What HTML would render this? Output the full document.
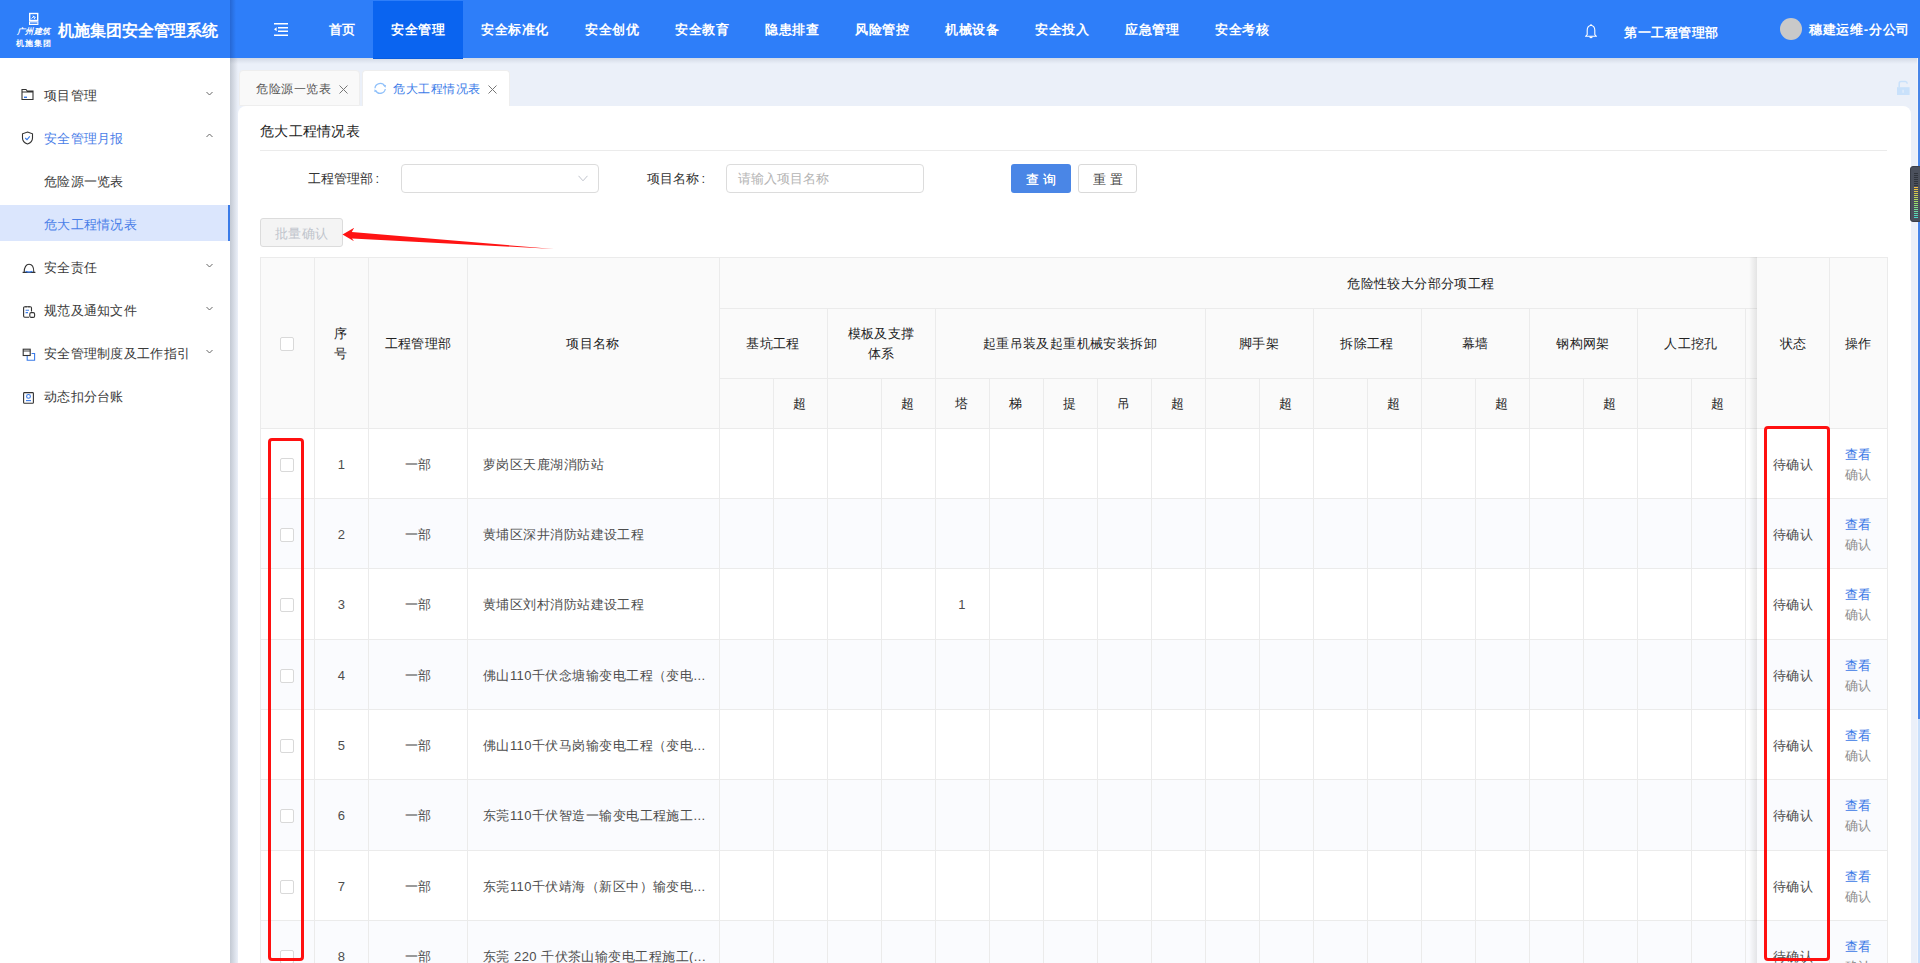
<!DOCTYPE html><html><head><meta charset="utf-8"><title>危大工程情况表</title><style>
*{margin:0;padding:0;box-sizing:border-box}
svg{display:block}
html,body{width:1920px;height:963px;overflow:hidden}
body{position:relative;background:#ebf0f9;font-family:"Liberation Sans",sans-serif;font-size:13px;color:#333}
.a{position:absolute}
.hdr{left:0;top:0;width:1920px;height:58px;background:#2e7ef9}
.nav{top:1px;height:58px;line-height:58px;color:#fff;font-size:13px;letter-spacing:0.5px;font-weight:bold;white-space:nowrap}
.navact{background:#0a64f0}
.side{left:0;top:58px;width:230px;height:905px;background:#fff}
.sshadow{left:230px;top:58px;width:8px;height:905px;background:linear-gradient(to right,#c3c9d3,#ebf0f9)}
.mi{left:0;width:230px;height:36px;line-height:36px;font-size:13px;letter-spacing:0.3px;color:#333;white-space:nowrap}
.t{white-space:nowrap;line-height:1}
.cb{width:14px;height:14px;border:1px solid #d9d9d9;border-radius:2px;background:#fff}

.hl{height:1px;background:#ebeef5}
.th{color:#222;font-size:13px;letter-spacing:0.4px;text-align:center;white-space:nowrap;line-height:20px}
.td{color:#4d4d4d;font-size:13px;letter-spacing:0.45px;white-space:nowrap;line-height:20px}
</style></head><body>
<div class="a hdr"></div>
<div class="a" style="left:16px;top:12px;width:36px;height:38px">
<svg width="36" height="38" viewBox="0 0 36 38">
<rect x="13.7" y="1.5" width="8" height="7" fill="none" stroke="#fff" stroke-width="1.4"/>
<path d="M15.5 6.5 Q17.5 3 19.8 5.5 M17 3.6 L18.8 7.2" fill="none" stroke="#fff" stroke-width="0.9"/>
<rect x="13" y="9.3" width="9.4" height="3.7" fill="#fff"/>
<rect x="14" y="10.3" width="7.4" height="1.7" fill="#5d9bf9"/>
</svg></div>
<div class="a t" style="left:17px;top:27.5px;font-size:8px;color:#fff;font-style:italic;font-weight:bold;letter-spacing:0.4px">广州建筑</div>
<div class="a t" style="left:16px;top:39.5px;font-size:8px;color:#fff;font-weight:bold;letter-spacing:1.1px">机施集团</div>
<div class="a t" style="left:58px;top:22px;font-size:16.3px;color:#fff;font-weight:bold">机施集团安全管理系统</div>
<div class="a" style="left:230px;top:0;width:6px;height:58px;background:linear-gradient(to right,rgba(0,0,40,0.18),rgba(0,0,40,0))"></div>
<div class="a" style="left:274px;top:23px;width:14px;height:13px"><svg width="14" height="13" viewBox="0 0 14 13">
<rect x="0" y="0" width="14" height="1.5" fill="#fff"/><rect x="4" y="4" width="10" height="1.5" fill="#fff"/>
<rect x="4" y="7.5" width="10" height="1.5" fill="#fff"/><rect x="0" y="11.5" width="14" height="1.5" fill="#fff"/>
<path d="M0 6.2 L2.6 4.2 L2.6 8.2Z" fill="#fff"/></svg></div>
<div class="a nav" style="left:311px;width:62px;text-align:center">首页</div>
<div class="a nav navact" style="left:373px;width:90px;text-align:center">安全管理</div>
<div class="a nav" style="left:463px;width:104px;text-align:center">安全标准化</div>
<div class="a nav" style="left:567px;width:90px;text-align:center">安全创优</div>
<div class="a nav" style="left:657px;width:90px;text-align:center">安全教育</div>
<div class="a nav" style="left:747px;width:90px;text-align:center">隐患排查</div>
<div class="a nav" style="left:837px;width:90px;text-align:center">风险管控</div>
<div class="a nav" style="left:927px;width:90px;text-align:center">机械设备</div>
<div class="a nav" style="left:1017px;width:90px;text-align:center">安全投入</div>
<div class="a nav" style="left:1107px;width:90px;text-align:center">应急管理</div>
<div class="a nav" style="left:1197px;width:90px;text-align:center">安全考核</div>
<div class="a" style="left:1585px;top:24px;width:12px;height:15px"><svg width="12" height="15" viewBox="0 0 12 15">
<path d="M6 1.2 C3.3 1.8 2.2 3.8 2.2 6.2 L2.2 10.6 L0.8 12.2 L11.2 12.2 L9.8 10.6 L9.8 6.2 C9.8 3.8 8.7 1.8 6 1.2Z" fill="none" stroke="#fff" stroke-width="1.1"/>
<path d="M4.6 12.6 Q6 14.6 7.4 12.6" fill="none" stroke="#fff" stroke-width="1.1"/>
<rect x="5.5" y="0" width="1" height="1.5" fill="#fff"/></svg></div>
<div class="a t" style="left:1624px;top:25.5px;font-size:13px;letter-spacing:0.5px;color:#fff;font-weight:bold">第一工程管理部</div>
<div class="a" style="left:1780px;top:18px;width:22px;height:22px;border-radius:50%;background:#c9c9c9"></div>
<div class="a t" style="left:1809px;top:23px;font-size:13px;letter-spacing:0.7px;color:#fff;font-weight:bold">穗建运维-分公司</div>
<div class="a side"></div>
<div class="a sshadow"></div>
<div class="a" style="left:230px;top:58px;width:1690px;height:6px;background:linear-gradient(to bottom,rgba(0,20,60,0.10),rgba(0,20,60,0))"></div>
<div class="a mi" style="top:78px;padding-left:44px;color:#3a3a3a">项目管理</div>
<div class="a" style="left:21px;top:88px;width:14px;height:14px"><svg width="14" height="14" viewBox="0 0 14 14"><path d="M1 1.5 H5 L6.2 3 H12 V11.5 H1Z M1 4 H12" fill="none" stroke="#333" stroke-width="1.1"/><rect x="3" y="8.6" width="3" height="1.4" fill="#3a7be8"/></svg></div>
<div class="a" style="left:206px;top:90.5px;width:7px;height:5px"><svg width="7" height="5" viewBox="0 0 7 5"><path d="M0.5 1 L3.5 4 L6.5 1" fill="none" stroke="#666" stroke-width="1"/></svg></div>
<div class="a mi" style="top:121px;padding-left:44px;color:#4a7ee8">安全管理月报</div>
<div class="a" style="left:21px;top:131px;width:14px;height:14px"><svg width="14" height="14" viewBox="0 0 14 14"><path d="M6.5 1 L11.5 2.8 V7 C11.5 10 9 12.2 6.5 13 C4 12.2 1.5 10 1.5 7 V2.8Z" fill="none" stroke="#333" stroke-width="1.1"/><path d="M4.2 7 L6 8.6 L8.8 5.4" fill="none" stroke="#3a7be8" stroke-width="1.1"/></svg></div>
<div class="a" style="left:206px;top:133px;width:7px;height:5px"><svg width="7" height="5" viewBox="0 0 7 5"><path d="M0.5 4 L3.5 1 L6.5 4" fill="none" stroke="#666" stroke-width="1"/></svg></div>
<div class="a mi" style="top:164px;padding-left:44px;color:#3a3a3a">危险源一览表</div>
<div class="a" style="left:0;top:205px;width:230px;height:36px;background:#dbe6fd"></div>
<div class="a" style="left:228px;top:205px;width:2px;height:36px;background:#3a7be8"></div>
<div class="a mi" style="top:207px;padding-left:44px;color:#4a7ee8">危大工程情况表</div>
<div class="a mi" style="top:250px;padding-left:44px;color:#3a3a3a">安全责任</div>
<div class="a" style="left:22px;top:260.5px;width:14px;height:14px"><svg width="14" height="14" viewBox="0 0 14 14"><path d="M2.2 11 C2.2 6.2 4.2 3.3 7 3.3 C9.8 3.3 11.8 6.2 11.8 11" fill="none" stroke="#333" stroke-width="1.1"/><path d="M0.6 11.4 H13.4" stroke="#333" stroke-width="1.2"/><path d="M3.6 10.2 Q7 12 10.4 10.2" stroke="#3a7be8" fill="none" stroke-width="1.1"/></svg></div>
<div class="a" style="left:206px;top:262.5px;width:7px;height:5px"><svg width="7" height="5" viewBox="0 0 7 5"><path d="M0.5 1 L3.5 4 L6.5 1" fill="none" stroke="#666" stroke-width="1"/></svg></div>
<div class="a mi" style="top:293px;padding-left:44px;color:#3a3a3a">规范及通知文件</div>
<div class="a" style="left:22px;top:303.5px;width:14px;height:14px"><svg width="14" height="14" viewBox="0 0 14 14"><path d="M9.5 7.5 V4 Q9.5 2.8 8.3 2.8 H2.8 Q1.6 2.8 1.6 4 V12 Q1.6 13.2 2.8 13.2 H7" fill="none" stroke="#333" stroke-width="1.1"/><path d="M4 2 V3.5 M7 2 V3.5" stroke="#333" stroke-width="1"/><path d="M3.6 6.3 H7 M3.6 8.6 H6" stroke="#3a7be8" stroke-width="1.1"/><rect x="7.8" y="8.6" width="4.8" height="4.8" rx="1.4" fill="#fff" stroke="#333" stroke-width="1.1"/></svg></div>
<div class="a" style="left:206px;top:305.5px;width:7px;height:5px"><svg width="7" height="5" viewBox="0 0 7 5"><path d="M0.5 1 L3.5 4 L6.5 1" fill="none" stroke="#666" stroke-width="1"/></svg></div>
<div class="a mi" style="top:336px;padding-left:44px;color:#3a3a3a">安全管理制度及工作指引</div>
<div class="a" style="left:22px;top:346.5px;width:14px;height:14px"><svg width="14" height="14" viewBox="0 0 14 14"><rect x="1.2" y="2.2" width="7" height="6.3" fill="none" stroke="#333" stroke-width="1.1"/><path d="M1.2 4 H8.2" stroke="#333" stroke-width="0.9"/><path d="M5.2 9 V13.2 H12.6 V6.5 H9.6" fill="none" stroke="#3a7be8" stroke-width="1.1"/></svg></div>
<div class="a" style="left:206px;top:348.5px;width:7px;height:5px"><svg width="7" height="5" viewBox="0 0 7 5"><path d="M0.5 1 L3.5 4 L6.5 1" fill="none" stroke="#666" stroke-width="1"/></svg></div>
<div class="a mi" style="top:379px;padding-left:44px;color:#3a3a3a">动态扣分台账</div>
<div class="a" style="left:22px;top:389.5px;width:14px;height:14px"><svg width="14" height="14" viewBox="0 0 14 14"><rect x="1.6" y="2.6" width="9.8" height="10.6" rx="0.8" fill="none" stroke="#333" stroke-width="1.1"/><circle cx="6.5" cy="6.4" r="1.9" fill="none" stroke="#3a7be8" stroke-width="1.1"/><path d="M4 10.6 H9" stroke="#3a7be8" stroke-width="1.1"/></svg></div>
<div class="a" style="left:239px;top:70px;width:121px;height:36px;background:#f9f9f9;border:1px solid #eeeeee;border-radius:4px 4px 0 0"></div>
<div class="a t" style="left:256px;top:82.5px;font-size:12px;letter-spacing:0.5px;color:#555">危险源一览表</div>
<div class="a" style="left:339px;top:85px;width:9px;height:9px"><svg width="9" height="9" viewBox="0 0 9 9"><path d="M0.5 0.5 L8.5 8.5 M8.5 0.5 L0.5 8.5" stroke="#777" stroke-width="1"/></svg></div>
<div class="a" style="left:362px;top:70px;width:148px;height:42px;background:#fff;border:1px solid #eeeeee;border-bottom:none;border-radius:4px 4px 0 0"></div>
<div class="a" style="left:373px;top:81px;width:14px;height:14px"><svg width="14" height="14" viewBox="0 0 14 14"><path d="M2 7.3 A5.2 5.2 0 0 1 11.8 5.2" fill="none" stroke="#8fc0fa" stroke-width="1.3"/><path d="M10.2 4.6 L13 3.9 L12.6 6.8Z" fill="#8fc0fa"/><path d="M12.3 8 A5.2 5.2 0 0 1 2.6 9.6" fill="none" stroke="#8fc0fa" stroke-width="1.3"/><path d="M4 10.2 L1.3 11 L1.6 8.2Z" fill="#8fc0fa"/></svg></div>
<div class="a t" style="left:393px;top:82.5px;font-size:12px;letter-spacing:0.5px;color:#3a7be8">危大工程情况表</div>
<div class="a" style="left:488px;top:85px;width:9px;height:9px"><svg width="9" height="9" viewBox="0 0 9 9"><path d="M0.5 0.5 L8.5 8.5 M8.5 0.5 L0.5 8.5" stroke="#777" stroke-width="1"/></svg></div>
<div class="a" style="left:1896px;top:80px;width:15px;height:16px"><svg width="15" height="16" viewBox="0 0 15 16"><path d="M3.2 7.5 V3.4 Q3.2 1.6 5 1.6 H9.4 Q10.9 1.6 11.3 3.6" fill="none" stroke="#c9e1fb" stroke-width="1.5"/><rect x="1" y="7.2" width="12.6" height="7.8" fill="#c9e1fb"/><rect x="6.3" y="9.8" width="1.6" height="3" fill="#deebfb"/></svg></div>
<div class="a" style="left:238px;top:106px;width:1673px;height:900px;background:#fff;border-radius:8px 8px 0 0"></div>
<div class="a t" style="left:260px;top:124px;font-size:14px;letter-spacing:0.25px;color:#222">危大工程情况表</div>
<div class="a" style="left:260px;top:150px;width:1627px;height:1px;background:#ebebeb"></div>
<div class="a t" style="left:308px;top:172px;font-size:13px;color:#333">工程管理部<span style="margin-left:2.5px">:</span></div>
<div class="a" style="left:401px;top:164px;width:198px;height:29px;border:1px solid #dcdcdc;border-radius:4px;background:#fff"></div>
<div class="a" style="left:578px;top:175px;width:10px;height:7px"><svg width="10" height="7" viewBox="0 0 10 7"><path d="M0.5 0.8 L5 5.8 L9.5 0.8" fill="none" stroke="#c0c4cc" stroke-width="1"/></svg></div>
<div class="a t" style="left:647px;top:172px;font-size:13px;color:#333">项目名称<span style="margin-left:2.5px">:</span></div>
<div class="a" style="left:726px;top:164px;width:198px;height:29px;border:1px solid #dcdcdc;border-radius:4px;background:#fff"></div>
<div class="a t" style="left:738px;top:172px;font-size:13px;color:#b4b4b4">请输入项目名称</div>
<div class="a" style="left:1011px;top:164px;width:60px;height:29px;border-radius:3px;background:#4a86e6"></div>
<div class="a t" style="left:1025.5px;top:173px;font-size:13px;color:#fff;letter-spacing:4px;text-shadow:0 0 0.3px #fff">查询</div>
<div class="a" style="left:1078px;top:164px;width:59px;height:29px;border:1px solid #d9d9d9;border-radius:3px;background:#fff"></div>
<div class="a t" style="left:1092.5px;top:173px;font-size:13px;color:#444;letter-spacing:4px">重置</div>
<div class="a" style="left:260px;top:218px;width:83px;height:29px;border:1px solid #dcdcdc;border-radius:3px;background:#f4f4f4"></div>
<div class="a t" style="left:275px;top:227px;font-size:13px;letter-spacing:0.4px;color:#c0c4cc">批量确认</div>
<div class="a" style="left:260px;top:257px;width:1627px;height:706px;background:#fff;border-radius:3px 3px 0 0;overflow:hidden">
<div class="a" style="left:0;top:0;width:1627px;height:171px;background:#fafafa"></div>
<div class="a" style="left:0;top:241px;width:1627px;height:70px;background:#fafbfe"></div>
<div class="a" style="left:0;top:382px;width:1627px;height:70px;background:#fafbfe"></div>
<div class="a" style="left:0;top:522px;width:1627px;height:71px;background:#fafbfe"></div>
<div class="a" style="left:0;top:663px;width:1627px;height:70px;background:#fafbfe"></div>
</div>
<div class="a" style="left:260px;top:257px;width:1627px;height:1px;background:#ebebeb"></div>
<div class="a" style="left:260px;top:257px;width:1px;height:706px;background:#ebebeb"></div>
<div class="a" style="left:314px;top:257px;width:1px;height:706px;background:#ebebeb"></div>
<div class="a" style="left:368px;top:257px;width:1px;height:706px;background:#ebebeb"></div>
<div class="a" style="left:467px;top:257px;width:1px;height:706px;background:#ebebeb"></div>
<div class="a" style="left:719px;top:257px;width:1px;height:706px;background:#ebebeb"></div>
<div class="a" style="left:773px;top:378px;width:1px;height:585px;background:#ebebeb"></div>
<div class="a" style="left:827px;top:308px;width:1px;height:655px;background:#ebebeb"></div>
<div class="a" style="left:881px;top:378px;width:1px;height:585px;background:#ebebeb"></div>
<div class="a" style="left:935px;top:308px;width:1px;height:655px;background:#ebebeb"></div>
<div class="a" style="left:989px;top:378px;width:1px;height:585px;background:#ebebeb"></div>
<div class="a" style="left:1043px;top:378px;width:1px;height:585px;background:#ebebeb"></div>
<div class="a" style="left:1097px;top:378px;width:1px;height:585px;background:#ebebeb"></div>
<div class="a" style="left:1151px;top:378px;width:1px;height:585px;background:#ebebeb"></div>
<div class="a" style="left:1205px;top:308px;width:1px;height:655px;background:#ebebeb"></div>
<div class="a" style="left:1259px;top:378px;width:1px;height:585px;background:#ebebeb"></div>
<div class="a" style="left:1313px;top:308px;width:1px;height:655px;background:#ebebeb"></div>
<div class="a" style="left:1367px;top:378px;width:1px;height:585px;background:#ebebeb"></div>
<div class="a" style="left:1421px;top:308px;width:1px;height:655px;background:#ebebeb"></div>
<div class="a" style="left:1475px;top:378px;width:1px;height:585px;background:#ebebeb"></div>
<div class="a" style="left:1529px;top:308px;width:1px;height:655px;background:#ebebeb"></div>
<div class="a" style="left:1583px;top:378px;width:1px;height:585px;background:#ebebeb"></div>
<div class="a" style="left:1637px;top:308px;width:1px;height:655px;background:#ebebeb"></div>
<div class="a" style="left:1691px;top:378px;width:1px;height:585px;background:#ebebeb"></div>
<div class="a" style="left:1745px;top:308px;width:1px;height:655px;background:#ebebeb"></div>
<div class="a" style="left:1799px;top:308px;width:1px;height:655px;background:#ebebeb"></div>
<div class="a" style="left:719px;top:308px;width:1168px;height:1px;background:#ebebeb"></div>
<div class="a" style="left:719px;top:378px;width:1168px;height:1px;background:#ebebeb"></div>
<div class="a" style="left:260px;top:428px;width:1627px;height:1px;background:#ebebeb"></div>
<div class="a" style="left:260px;top:498px;width:1627px;height:1px;background:#ebebeb"></div>
<div class="a" style="left:260px;top:568px;width:1627px;height:1px;background:#ebebeb"></div>
<div class="a" style="left:260px;top:639px;width:1627px;height:1px;background:#ebebeb"></div>
<div class="a" style="left:260px;top:709px;width:1627px;height:1px;background:#ebebeb"></div>
<div class="a" style="left:260px;top:779px;width:1627px;height:1px;background:#ebebeb"></div>
<div class="a" style="left:260px;top:850px;width:1627px;height:1px;background:#ebebeb"></div>
<div class="a" style="left:260px;top:920px;width:1627px;height:1px;background:#ebebeb"></div>
<div class="a th" style="left:241px;top:334px;width:200px;text-align:center;top:324px">序<br>号</div>
<div class="a th" style="left:318px;top:334px;width:200px;text-align:center">工程管理部</div>
<div class="a th" style="left:493px;top:334px;width:200px;text-align:center">项目名称</div>
<div class="a th" style="left:1321px;top:274px;width:200px;text-align:center">危险性较大分部分项工程</div>
<div class="a th" style="left:673px;top:334px;width:200px;text-align:center">基坑工程</div>
<div class="a th" style="left:781px;top:334px;width:200px;text-align:center;top:324px">模板及支撑<br>体系</div>
<div class="a th" style="left:970px;top:334px;width:200px;text-align:center">起重吊装及起重机械安装拆卸</div>
<div class="a th" style="left:1159px;top:334px;width:200px;text-align:center">脚手架</div>
<div class="a th" style="left:1267px;top:334px;width:200px;text-align:center">拆除工程</div>
<div class="a th" style="left:1375px;top:334px;width:200px;text-align:center">幕墙</div>
<div class="a th" style="left:1483px;top:334px;width:200px;text-align:center">钢构网架</div>
<div class="a th" style="left:1591px;top:334px;width:200px;text-align:center">人工挖孔</div>
<div class="a th" style="left:700px;top:394px;width:200px;text-align:center">超</div>
<div class="a th" style="left:808px;top:394px;width:200px;text-align:center">超</div>
<div class="a th" style="left:862px;top:394px;width:200px;text-align:center">塔</div>
<div class="a th" style="left:916px;top:394px;width:200px;text-align:center">梯</div>
<div class="a th" style="left:970px;top:394px;width:200px;text-align:center">提</div>
<div class="a th" style="left:1024px;top:394px;width:200px;text-align:center">吊</div>
<div class="a th" style="left:1078px;top:394px;width:200px;text-align:center">超</div>
<div class="a th" style="left:1186px;top:394px;width:200px;text-align:center">超</div>
<div class="a th" style="left:1294px;top:394px;width:200px;text-align:center">超</div>
<div class="a th" style="left:1402px;top:394px;width:200px;text-align:center">超</div>
<div class="a th" style="left:1510px;top:394px;width:200px;text-align:center">超</div>
<div class="a th" style="left:1618px;top:394px;width:200px;text-align:center">超</div>
<div class="a cb" style="left:280px;top:337px"></div>
<div class="a cb" style="left:280px;top:457.66666666666663px"></div>
<div class="a td" style="left:241.7px;top:454.66666666666663px;width:200px;text-align:center">1</div>
<div class="a td" style="left:318px;top:454.66666666666663px;width:200px;text-align:center">一部</div>
<div class="a td" style="left:483px;top:454.66666666666663px">萝岗区天鹿湖消防站</div>
<div class="a cb" style="left:280px;top:528.0px"></div>
<div class="a td" style="left:241.7px;top:525.0px;width:200px;text-align:center">2</div>
<div class="a td" style="left:318px;top:525.0px;width:200px;text-align:center">一部</div>
<div class="a td" style="left:483px;top:525.0px">黄埔区深井消防站建设工程</div>
<div class="a cb" style="left:280px;top:598.3333333333333px"></div>
<div class="a td" style="left:241.7px;top:595.3333333333333px;width:200px;text-align:center">3</div>
<div class="a td" style="left:318px;top:595.3333333333333px;width:200px;text-align:center">一部</div>
<div class="a td" style="left:483px;top:595.3333333333333px">黄埔区刘村消防站建设工程</div>
<div class="a td" style="left:862px;top:595.3333333333333px;width:200px;text-align:center">1</div>
<div class="a cb" style="left:280px;top:668.6666666666666px"></div>
<div class="a td" style="left:241.7px;top:665.6666666666666px;width:200px;text-align:center">4</div>
<div class="a td" style="left:318px;top:665.6666666666666px;width:200px;text-align:center">一部</div>
<div class="a td" style="left:483px;top:665.6666666666666px">佛山110千伏念塘输变电工程（变电...</div>
<div class="a cb" style="left:280px;top:739.0px"></div>
<div class="a td" style="left:241.7px;top:736.0px;width:200px;text-align:center">5</div>
<div class="a td" style="left:318px;top:736.0px;width:200px;text-align:center">一部</div>
<div class="a td" style="left:483px;top:736.0px">佛山110千伏马岗输变电工程（变电...</div>
<div class="a cb" style="left:280px;top:809.3333333333334px"></div>
<div class="a td" style="left:241.7px;top:806.3333333333334px;width:200px;text-align:center">6</div>
<div class="a td" style="left:318px;top:806.3333333333334px;width:200px;text-align:center">一部</div>
<div class="a td" style="left:483px;top:806.3333333333334px">东莞110千伏智造一输变电工程施工...</div>
<div class="a cb" style="left:280px;top:879.6666666666666px"></div>
<div class="a td" style="left:241.7px;top:876.6666666666666px;width:200px;text-align:center">7</div>
<div class="a td" style="left:318px;top:876.6666666666666px;width:200px;text-align:center">一部</div>
<div class="a td" style="left:483px;top:876.6666666666666px">东莞110千伏靖海（新区中）输变电...</div>
<div class="a cb" style="left:280px;top:950.0px"></div>
<div class="a td" style="left:241.7px;top:947.0px;width:200px;text-align:center">8</div>
<div class="a td" style="left:318px;top:947.0px;width:200px;text-align:center">一部</div>
<div class="a td" style="left:483px;top:947.0px">东莞 220 千伏茶山输变电工程施工(...</div>
<div class="a" style="left:1749px;top:257px;width:8px;height:706px;background:linear-gradient(to right,rgba(0,0,0,0),rgba(0,0,0,0.09))"></div>
<div class="a" style="left:1757px;top:257px;width:130px;height:706px;background:#fff;overflow:hidden">
<div class="a" style="left:0;top:0;width:130px;height:171px;background:#fafafa"></div>
<div class="a" style="left:0;top:241px;width:130px;height:70px;background:#fafbfe"></div>
<div class="a" style="left:0;top:382px;width:130px;height:70px;background:#fafbfe"></div>
<div class="a" style="left:0;top:522px;width:130px;height:71px;background:#fafbfe"></div>
<div class="a" style="left:0;top:663px;width:130px;height:70px;background:#fafbfe"></div>
</div>
<div class="a" style="left:1757px;top:257px;width:130px;height:1px;background:#ebebeb"></div>
<div class="a" style="left:1829px;top:257px;width:1px;height:706px;background:#ebebeb"></div>
<div class="a" style="left:1887px;top:257px;width:1px;height:706px;background:#ebebeb"></div>
<div class="a" style="left:1757px;top:428px;width:130px;height:1px;background:#ebebeb"></div>
<div class="a" style="left:1757px;top:498px;width:130px;height:1px;background:#ebebeb"></div>
<div class="a" style="left:1757px;top:568px;width:130px;height:1px;background:#ebebeb"></div>
<div class="a" style="left:1757px;top:639px;width:130px;height:1px;background:#ebebeb"></div>
<div class="a" style="left:1757px;top:709px;width:130px;height:1px;background:#ebebeb"></div>
<div class="a" style="left:1757px;top:779px;width:130px;height:1px;background:#ebebeb"></div>
<div class="a" style="left:1757px;top:850px;width:130px;height:1px;background:#ebebeb"></div>
<div class="a" style="left:1757px;top:920px;width:130px;height:1px;background:#ebebeb"></div>
<div class="a th" style="left:1693px;top:334px;width:200px;text-align:center">状态</div>
<div class="a th" style="left:1758px;top:334px;width:200px;text-align:center">操作</div>
<div class="a td" style="left:1693px;top:454.66666666666663px;width:200px;text-align:center">待确认</div>
<div class="a td" style="left:1758px;top:444.66666666666663px;width:200px;text-align:center;color:#3a78e6">查看</div>
<div class="a td" style="left:1758px;top:464.66666666666663px;width:200px;text-align:center;color:#8f8f8f">确认</div>
<div class="a td" style="left:1693px;top:525.0px;width:200px;text-align:center">待确认</div>
<div class="a td" style="left:1758px;top:515.0px;width:200px;text-align:center;color:#3a78e6">查看</div>
<div class="a td" style="left:1758px;top:535.0px;width:200px;text-align:center;color:#8f8f8f">确认</div>
<div class="a td" style="left:1693px;top:595.3333333333333px;width:200px;text-align:center">待确认</div>
<div class="a td" style="left:1758px;top:585.3333333333333px;width:200px;text-align:center;color:#3a78e6">查看</div>
<div class="a td" style="left:1758px;top:605.3333333333333px;width:200px;text-align:center;color:#8f8f8f">确认</div>
<div class="a td" style="left:1693px;top:665.6666666666666px;width:200px;text-align:center">待确认</div>
<div class="a td" style="left:1758px;top:655.6666666666666px;width:200px;text-align:center;color:#3a78e6">查看</div>
<div class="a td" style="left:1758px;top:675.6666666666666px;width:200px;text-align:center;color:#8f8f8f">确认</div>
<div class="a td" style="left:1693px;top:736.0px;width:200px;text-align:center">待确认</div>
<div class="a td" style="left:1758px;top:726.0px;width:200px;text-align:center;color:#3a78e6">查看</div>
<div class="a td" style="left:1758px;top:746.0px;width:200px;text-align:center;color:#8f8f8f">确认</div>
<div class="a td" style="left:1693px;top:806.3333333333334px;width:200px;text-align:center">待确认</div>
<div class="a td" style="left:1758px;top:796.3333333333334px;width:200px;text-align:center;color:#3a78e6">查看</div>
<div class="a td" style="left:1758px;top:816.3333333333334px;width:200px;text-align:center;color:#8f8f8f">确认</div>
<div class="a td" style="left:1693px;top:876.6666666666666px;width:200px;text-align:center">待确认</div>
<div class="a td" style="left:1758px;top:866.6666666666666px;width:200px;text-align:center;color:#3a78e6">查看</div>
<div class="a td" style="left:1758px;top:886.6666666666666px;width:200px;text-align:center;color:#8f8f8f">确认</div>
<div class="a td" style="left:1693px;top:947.0px;width:200px;text-align:center">待确认</div>
<div class="a td" style="left:1758px;top:937.0px;width:200px;text-align:center;color:#3a78e6">查看</div>
<div class="a td" style="left:1758px;top:957.0px;width:200px;text-align:center;color:#8f8f8f">确认</div>
<div class="a" style="left:268px;top:438px;width:36px;height:523px;border:3px solid #ff1010;border-radius:4px"></div>
<div class="a" style="left:1764px;top:426px;width:66px;height:535px;border:3px solid #ff1010;border-radius:4px"></div>
<svg class="a" style="left:330px;top:220px" width="240" height="40" viewBox="330 220 240 40">
<path d="M342.5 234.5 L354.2 227.8 L351.8 232 L554 249 L352 238.5 L354 241.3Z" fill="#ff1414"/></svg>
<div class="a" style="left:1917px;top:58px;width:1px;height:905px;background:#f3f5fb"></div>
<div class="a" style="left:1918px;top:58px;width:2px;height:905px;background:#c8dffb"></div>
<div class="a" style="left:1918px;top:58px;width:2px;height:661px;background:#4785e8"></div>
<div class="a" style="left:1910px;top:166px;width:12px;height:56px;background:#4b505c;border-radius:3px;border:1px solid #3a3e48"></div>
<div class="a" style="left:1914px;top:173px;width:4px;height:1px;background:#30343c"></div>
<div class="a" style="left:1914px;top:175px;width:4px;height:1px;background:#30343c"></div>
<div class="a" style="left:1914px;top:177px;width:4px;height:1px;background:#30343c"></div>
<div class="a" style="left:1914px;top:179px;width:4px;height:1px;background:#30343c"></div>
<div class="a" style="left:1914px;top:181px;width:4px;height:1px;background:#30343c"></div>
<div class="a" style="left:1914px;top:183px;width:4px;height:1px;background:#30343c"></div>
<div class="a" style="left:1914px;top:185px;width:4px;height:1px;background:#30343c"></div>
<div class="a" style="left:1914px;top:187px;width:4px;height:1px;background:#f5be3c"></div>
<div class="a" style="left:1914px;top:189px;width:4px;height:1px;background:#eac341"></div>
<div class="a" style="left:1914px;top:191px;width:4px;height:1px;background:#dec847"></div>
<div class="a" style="left:1914px;top:193px;width:4px;height:1px;background:#d3cc4c"></div>
<div class="a" style="left:1914px;top:195px;width:4px;height:1px;background:#c8d151"></div>
<div class="a" style="left:1914px;top:197px;width:4px;height:1px;background:#bcd657"></div>
<div class="a" style="left:1914px;top:199px;width:4px;height:1px;background:#b1db5c"></div>
<div class="a" style="left:1914px;top:201px;width:4px;height:1px;background:#a6e061"></div>
<div class="a" style="left:1914px;top:203px;width:4px;height:1px;background:#9ae16b"></div>
<div class="a" style="left:1914px;top:205px;width:4px;height:1px;background:#8ee078"></div>
<div class="a" style="left:1914px;top:207px;width:4px;height:1px;background:#83df85"></div>
<div class="a" style="left:1914px;top:209px;width:4px;height:1px;background:#77dd93"></div>
<div class="a" style="left:1914px;top:211px;width:4px;height:1px;background:#6bdca0"></div>
<div class="a" style="left:1914px;top:213px;width:4px;height:1px;background:#5fdbad"></div>
<div class="a" style="left:1914px;top:215px;width:4px;height:1px;background:#54d9bb"></div>
<div class="a" style="left:1914px;top:217px;width:4px;height:1px;background:#48d8c8"></div>
</body></html>
